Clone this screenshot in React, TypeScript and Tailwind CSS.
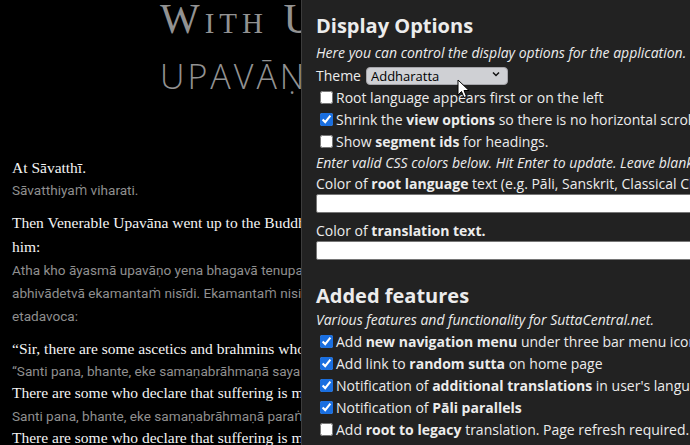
import { useState } from "react";

const panelFont = { fontFamily: "'Open Sans', 'Noto Sans', sans-serif" };
const serif = { fontFamily: "'Liberation Serif', serif" };
const sans = { fontFamily: "Roboto, 'Open Sans', sans-serif" };
const titleSans = { fontFamily: "'Open Sans', sans-serif" };

type Opt = { id: string; checked: boolean; label: React.ReactNode };

const Check = ({ opt, onToggle }: { opt: Opt; onToggle: (id: string) => void }) => (
  <label className="flex items-center h-[22px] pl-1 whitespace-nowrap">
    <input
      type="checkbox"
      checked={opt.checked}
      onChange={() => onToggle(opt.id)}
      className="w-[13px] h-[13px] m-0 mr-[3px] accent-[#1a6fe0]"
    />
    <span>{opt.label}</span>
  </label>
);

const App = () => {
  const [display, setDisplay] = useState<Opt[]>([
    { id: "rootFirst", checked: false, label: "Root language appears first or on the left" },
    {
      id: "shrink",
      checked: true,
      label: (
        <>
          Shrink the <b>view options</b> so there is no horizontal scroll. If you
        </>
      ),
    },
    {
      id: "segIds",
      checked: false,
      label: (
        <>
          Show <b>segment ids</b> for headings.
        </>
      ),
    },
  ]);
  const [features, setFeatures] = useState<Opt[]>([
    {
      id: "nav",
      checked: true,
      label: (
        <>
          Add <b>new navigation menu</b> under three bar menu icon in the top
        </>
      ),
    },
    {
      id: "random",
      checked: true,
      label: (
        <>
          Add link to <b>random sutta</b> on home page
        </>
      ),
    },
    {
      id: "translations",
      checked: true,
      label: (
        <>
          Notification of <b>additional translations</b> in user's language
        </>
      ),
    },
    {
      id: "parallels",
      checked: true,
      label: (
        <>
          Notification of <b>Pāli parallels</b>
        </>
      ),
    },
    {
      id: "legacy",
      checked: false,
      label: (
        <>
          Add <b>root to legacy</b> translation. Page refresh required. No
        </>
      ),
    },
  ]);

  const toggle = (list: Opt[], set: (o: Opt[]) => void) => (id: string) =>
    set(list.map((o) => (o.id === id ? { ...o, checked: !o.checked } : o)));

  return (
    <div className="relative w-[690px] h-[445px] overflow-hidden bg-black">
      {/* sutta page */}
      <div className="w-[600px] pl-3 whitespace-nowrap">
        <h1 className="pl-[148px] text-[#929292]">
          <div
            className="-mt-[2px] h-[42px] text-[42px] leading-[42px] tracking-[5px] [font-variant:small-caps]"
            style={serif}
          >
            With Upavāṇa
          </div>
          <div className="mt-[16px] h-[40px] text-[34px] leading-[40px] font-light tracking-[3px]" style={titleSans}>
            UPAVĀṆASUTTA
          </div>
        </h1>
        <div className="mt-[61px] text-[15.5px]">
          <p className="text-[#f4f4f4] leading-[22px]" style={serif}>At Sāvatthī.</p>
          <p className="text-[#8f8f8f] text-[13.6px] leading-[22px]" style={sans}>Sāvatthiyaṁ viharati.</p>
          <p className="mt-[10px] text-[#f4f4f4] leading-[24px]" style={serif}>
            Then Venerable Upavāna went up to the Buddha, bowed, sat down to one side, and said to
            <br />
            him:
          </p>
          <p className="text-[#8f8f8f] text-[13.6px] leading-[23px]" style={sans}>
            Atha kho āyasmā upavāṇo yena bhagavā tenupasaṅkami; upasaṅkamitvā bhagavantaṁ
            <br />
            abhivādetvā ekamantaṁ nisīdi. Ekamantaṁ nisinno kho āyasmā upavāṇo bhagavantaṁ
            <br />
            etadavoca:
          </p>
          <p className="mt-[10px] text-[#f4f4f4] leading-[22px]" style={serif}>
            “Sir, there are some ascetics and brahmins who declare that suffering is made by oneself.
          </p>
          <p className="text-[#8f8f8f] text-[13.6px] leading-[22px]" style={sans}>
            “Santi pana, bhante, eke samaṇabrāhmaṇā sayaṅkataṁ dukkhaṁ paññapenti.
          </p>
          <p className="text-[#f4f4f4] leading-[22.5px]" style={serif}>
            There are some who declare that suffering is made by another.
          </p>
          <p className="text-[#8f8f8f] text-[13.6px] leading-[22.5px]" style={sans}>
            Santi pana, bhante, eke samaṇabrāhmaṇā paraṅkataṁ dukkhaṁ paññapenti.
          </p>
          <p className="text-[#f4f4f4] leading-[22.5px]" style={serif}>
            There are some who declare that suffering is made by both.
          </p>
        </div>
      </div>

      {/* options panel, floating over the page */}
      <div
        className="absolute top-0 left-[301px] w-[420px] h-[445px] bg-[#222222] border-l border-[#3c3c3c] pl-[14px] pt-[10px] text-[14px] text-[#ececec]"
        style={panelFont}
      >
        <h2 className="text-[20px] font-bold leading-[32px]">Display Options</h2>
        <p className="italic leading-[22px] whitespace-nowrap">
          Here you can control the display options for the application.
        </p>
        <div className="flex items-center h-[22px] gap-[5px]">
          <span>Theme</span>
          <div className="relative">
            <select className="appearance-none w-[142px] h-[18px] pl-[4px] rounded-[4px] bg-[#cfd0d4] text-black text-[13px] leading-[16px] border border-[#a5a5aa]">
              <option>Addharatta</option>
            </select>
            <svg
              className="absolute right-[8px] top-[6px] pointer-events-none"
              width="8"
              height="6"
              viewBox="0 0 8 6"
            >
              <path d="M1 1.5 L4 4.5 L7 1.5" stroke="#111" strokeWidth="1.5" fill="none" />
            </svg>
          </div>
        </div>
        {display.map((o) => (
          <Check key={o.id} opt={o} onToggle={toggle(display, setDisplay)} />
        ))}
        <p className="italic leading-[22px] whitespace-nowrap">
          Enter valid CSS colors below. Hit Enter to update. Leave blank to reset.
        </p>
        <p className="leading-[20px] whitespace-nowrap">
          Color of <b>root language</b> text (e.g. Pāli, Sanskrit, Classical Chinese)
        </p>
        <input type="text" className="block w-[400px] h-[19px] bg-white border border-[#767676] rounded-[2px]" />
        <p className="mt-[8px] leading-[20px] whitespace-nowrap">
          Color of <b>translation text.</b>
        </p>
        <input type="text" className="block w-[400px] h-[19px] bg-white border border-[#767676] rounded-[2px]" />

        <h2 className="mt-[22px] text-[20px] font-bold leading-[28px]">Added features</h2>
        <p className="italic leading-[20px] whitespace-nowrap">
          Various features and functionality for SuttaCentral.net.
        </p>
        {features.map((o) => (
          <Check key={o.id} opt={o} onToggle={toggle(features, setFeatures)} />
        ))}
      </div>

      {/* mouse pointer */}
      <svg className="absolute left-[457px] top-[79px]" width="14" height="21" viewBox="0 0 14 21">
        <path d="M1 1 L1 16 L4.5 12.5 L7 18.5 L9.5 17.5 L7 11.5 L12 11.5 Z" fill="#fff" stroke="#000" strokeWidth="1" />
      </svg>
    </div>
  );
};

export default App;
